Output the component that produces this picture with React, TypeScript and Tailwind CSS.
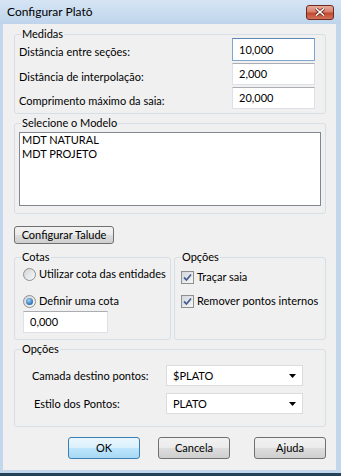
import React from "react";

const Radio = ({ checked }: { checked?: boolean }) => (
  <span className="flex items-center justify-center w-[13px] h-[13px] rounded-full border border-[#8e8f8f] bg-gradient-to-br from-[#d2d5da] to-[#f8f8f8] shrink-0">
    {checked && (
      <span className="w-[7px] h-[7px] rounded-full bg-[radial-gradient(circle_at_40%_35%,#9fd6f7,#2c6fb3_70%,#1b4f8c)]" />
    )}
  </span>
);

const Checkbox = () => (
  <span className="flex items-center justify-center w-[13px] h-[13px] border border-[#8e8f8f] bg-gradient-to-br from-[#d3d6dc] to-[#f7f7f7] shrink-0">
    <svg width="9" height="9" viewBox="0 0 9 9">
      <path d="M1 4.5 L3.5 7 L8 1.5" fill="none" stroke="#4a5f92" strokeWidth="1.8" />
    </svg>
  </span>
);

const Field = ({ value, focused, h }: { value: string; focused?: boolean; h: string }) => (
  <div
    className={`${h} w-[83px] flex items-center pl-[6px] bg-white border ${
      focused ? "border-[#7fa6cf] border-t-[#5e86b4]" : "border-[#dde0e6] border-t-[#abadb3]"
    }`}
  >
    {value}
  </div>
);

const Combo = ({ value }: { value: string }) => (
  <div className="w-[137px] h-[21px] flex items-center justify-between pl-[6px] pr-[6px] bg-white border border-[#dcdcdc]">
    <span>{value}</span>
    <svg width="7" height="4" viewBox="0 0 7 4">
      <path d="M0 0 H7 L3.5 4 Z" fill="#000" />
    </svg>
  </div>
);

const Button = ({ label, primary, cls }: { label: string; primary?: boolean; cls: string }) => (
  <div
    className={`${cls} flex items-center justify-center rounded-[3px] border whitespace-nowrap ${
      primary
        ? "border-[#3c7fb1] bg-[linear-gradient(#eaf6fd_0%,#d9f0fc_50%,#bee6fd_50%,#a7d9f5_100%)]"
        : "border-[#707070] bg-[linear-gradient(#f2f2f2_0%,#ebebeb_50%,#dddddd_50%,#cfcfcf_100%)]"
    }`}
  >
    {label}
  </div>
);

export default function App() {
  return (
    <div className="w-[341px] h-[476px] flex flex-col font-['Lato','Noto_Sans',sans-serif] text-[11px] leading-[16px] text-black whitespace-nowrap bg-[#c3d7ec] border-b-[3px] border-[#24435a]">
      {/* title bar */}
      <div className="h-[24px] shrink-0 flex items-center justify-between pl-[7px] pr-[7px] bg-gradient-to-b from-[#d6e5f5] to-[#bed4eb]">
        <span className="text-[12px]">Configurar Platô</span>
        <div className="w-[28px] h-[15px] flex items-center justify-center rounded-[3px] border border-[#6e2a1e] bg-[linear-gradient(#e9a99a_0%,#d7806c_45%,#c2482d_55%,#d3735c_100%)]">
          <svg width="10" height="8" viewBox="0 0 10 8">
            <path d="M1 0.5 L9 7.5 M9 0.5 L1 7.5" stroke="#5a1c12" strokeWidth="3" />
            <path d="M1 0.5 L9 7.5 M9 0.5 L1 7.5" stroke="#fff" strokeWidth="1.6" />
          </svg>
        </div>
      </div>

      {/* client area */}
      <div className="flex-1 flex flex-col ml-[3px] mr-[5px] mb-[3px] pl-[11px] pr-[10px] bg-[#f0f0f0]">
        {/* Medidas */}
        <fieldset className="min-w-0 mt-[2px] border border-[#d5dfe5] rounded-[3px] p-0 pb-[4px]">
          <legend className="ml-[6px] px-[1px]">Medidas</legend>
          <div className="-mt-[4px] flex flex-col gap-[2px] pl-[4px] pr-[10px]">
            <div className="flex items-center justify-between">
              <span className="pt-[5px]">Distância entre seções:</span>
              <Field value="10,000" focused h="h-[23px]" />
            </div>
            <div className="flex items-center justify-between">
              <span className="pt-[5px]">Distância de interpolação:</span>
              <Field value="2,000" h="h-[22px]" />
            </div>
            <div className="flex items-center justify-between">
              <span className="pt-[5px]">Comprimento máximo da saia:</span>
              <Field value="20,000" h="h-[22px]" />
            </div>
          </div>
        </fieldset>

        {/* Selecione o Modelo */}
        <fieldset className="min-w-0 mt-[1px] border border-[#d5dfe5] rounded-[3px] p-0 pb-[7px]">
          <legend className="ml-[6px] px-[1px]">Selecione o Modelo</legend>
          <div className="mt-[1px] mx-[4px] h-[74px] bg-white border border-[#828790] pl-[2px] leading-[14px]">
            <div>MDT NATURAL</div>
            <div>MDT PROJETO</div>
          </div>
        </fieldset>

        <Button label="Configurar Talude" cls="mt-[12px] w-[100px] h-[18px]" />

        {/* Cotas / Opções */}
        <div className="mt-[5px] flex gap-[3px]">
          <fieldset className="min-w-0 w-[157px] border border-[#d5dfe5] rounded-[3px] p-0 pb-[6px]">
            <legend className="ml-[6px] px-[1px]">Cotas</legend>
            <div className="flex flex-col pl-[8px]">
              <div className="mt-[1px] h-[16px] flex items-center gap-[3px]">
                <Radio />
                <span>Utilizar cota das entidades</span>
              </div>
              <div className="mt-[11px] h-[16px] flex items-center gap-[3px]">
                <Radio checked />
                <span>Definir uma cota</span>
              </div>
              <div className="mt-[2px] w-[85px] h-[22px] flex items-center pl-[6px] bg-white border border-[#dde0e6] border-t-[#abadb3]">
                0,000
              </div>
            </div>
          </fieldset>
          <fieldset className="min-w-0 flex-1 border border-[#d5dfe5] rounded-[3px] p-0">
            <legend className="ml-[6px] px-[1px]">Opções</legend>
            <div className="flex flex-col pl-[6px]">
              <div className="mt-[4px] h-[16px] flex items-center gap-[3px]">
                <Checkbox />
                <span>Traçar saia</span>
              </div>
              <div className="mt-[8px] h-[16px] flex items-center gap-[3px]">
                <Checkbox />
                <span>Remover pontos internos</span>
              </div>
            </div>
          </fieldset>
        </div>

        {/* Opções */}
        <fieldset className="min-w-0 mt-[1px] border border-[#d5dfe5] rounded-[3px] p-0 pb-[12px]">
          <legend className="ml-[6px] px-[1px]">Opções</legend>
          <div className="flex flex-col gap-[7px] pr-[22px]">
            <div className="mt-[8px] flex items-center justify-between pl-[17px]">
              <span>Camada destino pontos:</span>
              <Combo value="$PLATO" />
            </div>
            <div className="flex items-center justify-between pl-[19px]">
              <span>Estilo dos Pontos:</span>
              <Combo value="PLATO" />
            </div>
          </div>
        </fieldset>

        {/* buttons */}
        <div className="mt-[10px] flex">
          <Button label="OK" primary cls="ml-[54px] w-[72px] h-[22px]" />
          <Button label="Cancela" cls="ml-[18px] w-[72px] h-[22px]" />
          <Button label="Ajuda" cls="ml-[24px] w-[72px] h-[22px]" />
        </div>
      </div>
    </div>
  );
}
